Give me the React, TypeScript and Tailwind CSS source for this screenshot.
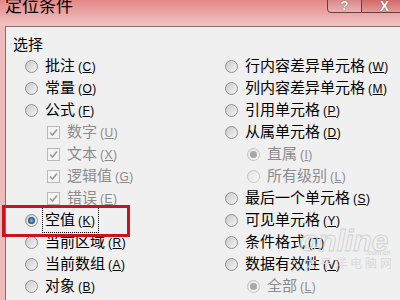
import React from 'react';

type Item = {
  label: string;
  key: string;
  kind: 'radio' | 'check';
  indent?: boolean;
  disabled?: boolean;
  checked?: boolean;
  focus?: boolean;
};

const left: Item[] = [
  { label: '批注', key: 'C', kind: 'radio' },
  { label: '常量', key: 'O', kind: 'radio' },
  { label: '公式', key: 'F', kind: 'radio' },
  { label: '数字', key: 'U', kind: 'check', indent: true, disabled: true, checked: true },
  { label: '文本', key: 'X', kind: 'check', indent: true, disabled: true, checked: true },
  { label: '逻辑值', key: 'G', kind: 'check', indent: true, disabled: true, checked: true },
  { label: '错误', key: 'E', kind: 'check', indent: true, disabled: true, checked: true },
  { label: '空值', key: 'K', kind: 'radio', checked: true, focus: true },
  { label: '当前区域', key: 'R', kind: 'radio' },
  { label: '当前数组', key: 'A', kind: 'radio' },
  { label: '对象', key: 'B', kind: 'radio' },
];

const right: Item[] = [
  { label: '行内容差异单元格', key: 'W', kind: 'radio' },
  { label: '列内容差异单元格', key: 'M', kind: 'radio' },
  { label: '引用单元格', key: 'P', kind: 'radio' },
  { label: '从属单元格', key: 'D', kind: 'radio' },
  { label: '直属', key: 'I', kind: 'radio', indent: true, disabled: true, checked: true },
  { label: '所有级别', key: 'L', kind: 'radio', indent: true, disabled: true },
  { label: '最后一个单元格', key: 'S', kind: 'radio' },
  { label: '可见单元格', key: 'Y', kind: 'radio' },
  { label: '条件格式', key: 'T', kind: 'radio' },
  { label: '数据有效性', key: 'V', kind: 'radio' },
  { label: '全部', key: 'L', kind: 'radio', indent: true, disabled: true, checked: true },
];

function Radio({ checked, disabled }: { checked?: boolean; disabled?: boolean }) {
  return (
    <span
      className={
        'w-[13px] h-[13px] shrink-0 rounded-full border flex items-center justify-center ' +
        (disabled
          ? 'border-[#c4c4c4] bg-linear-to-br from-[#e2e2e2] to-[#fafafa]'
          : 'border-[#8f8f8f] bg-linear-to-br from-[#c9c9c9] to-[#f6f6f6]')
      }
    >
      {checked && (
        <span
          className={
            'w-[7px] h-[7px] rounded-full ' +
            (disabled
              ? 'bg-[#a8a8a8]'
              : 'bg-radial from-[#8fc4ea] via-[#2f6a9c] to-[#173c5e]')
          }
        />
      )}
    </span>
  );
}

function Check({ checked }: { checked?: boolean }) {
  return (
    <span className="w-[13px] h-[13px] shrink-0 border border-[#b8b8b8] bg-[#f4f4f4] flex items-center justify-center">
      {checked && (
        <svg width="9" height="9" viewBox="0 0 9 9">
          <path d="M1 4.5 L3.5 7 L8 1.5" fill="none" stroke="#9a9a9a" strokeWidth="1.6" />
        </svg>
      )}
    </span>
  );
}

function Row({ item }: { item: Item }) {
  return (
    <div className={'h-[22px] flex items-center gap-[7px] ' + (item.indent ? 'pl-[22px]' : '')}>
      {item.kind === 'radio' ? (
        <Radio checked={item.checked} disabled={item.disabled} />
      ) : (
        <Check checked={item.checked} />
      )}
      <span
        className={
          'flex items-baseline whitespace-nowrap leading-[18px] ' +
          (item.disabled ? 'text-[#8c8c8c] ' : 'text-black ') +
          (item.focus ? 'outline outline-1 outline-dotted outline-black outline-offset-[2px]' : '')
        }
      >
        <span className="text-[15px]">{item.label}</span>
        <span className="text-[12px] ml-[3px] font-['Liberation_Sans',sans-serif] tracking-[0.5px]">
          (<span className="underline">{item.key}</span>)
        </span>
      </span>
    </div>
  );
}

export default function App() {
  return (
    <div className="relative w-[400px] h-[300px] overflow-hidden flex flex-col bg-[#eebcbc] font-['Noto_Sans_CJK_SC',sans-serif]">
      {/* title bar */}
      <div className="h-[26px] shrink-0 flex items-start justify-between bg-linear-to-b from-[#e48888] via-[#eaa6a6] to-[#f1c4c4]">
        <span className="text-[17px] leading-[17px] -mt-[4px] ml-[5px] text-black">定位条件</span>
        <div className="flex -mr-[8px]">
          <div className="w-[35px] h-[14px] -mt-[1px] border border-[#6e3c3c] rounded-bl-[4px] bg-linear-to-b from-[#d88a8a] to-[#eab2b2] flex items-end justify-center">
            <span className="text-[13px] leading-[12px] font-bold text-white [text-shadow:0_0_1px_#333] font-['Liberation_Sans',sans-serif]">?</span>
          </div>
          <div className="w-[46px] h-[14px] -mt-[1px] border border-l-0 border-[#6e3c3c] rounded-br-[4px] bg-linear-to-b from-[#d06a6a] to-[#e49a9a] flex items-end justify-center">
            <span className="text-[14px] leading-[12px] font-bold text-white [text-shadow:0_0_1px_#222] font-['Liberation_Sans',sans-serif]">X</span>
          </div>
        </div>
      </div>

      {/* client area */}
      <div className="flex-1 ml-[5px] border-l border-t border-[#8c6e6e] bg-[#f0f0f0] pt-[8px]">
        <div className="h-[18px] pl-[7px] text-[15px] leading-[18px] text-black">选择</div>
        <div className="grid grid-cols-[200px_1fr] pl-[19px] mt-[2px]">
          <div className="flex flex-col">
            {left.map((it, i) => (
              <Row key={i} item={it} />
            ))}
          </div>
          <div className="flex flex-col">
            {right.map((it, i) => (
              <Row key={i} item={it} />
            ))}
          </div>
        </div>
      </div>

      {/* red highlight annotation */}
      <div className="absolute left-[2px] top-[205px] w-[128px] h-[32px] border-[3px] border-[#c8141c]" />

      {/* watermark */}
      <div className="absolute left-[300px] top-[226px] text-[30px] leading-[30px] italic font-bold text-transparent [-webkit-text-stroke:1px_#d2d2d2] font-['Liberation_Sans',sans-serif]">
        online
      </div>
      <div className="absolute left-[366px] top-[248px] text-[7px] text-[#cfcfcf] font-['Liberation_Sans',sans-serif]">.com.cn</div>
      <div className="absolute left-[305px] top-[257px] text-[12px] leading-[12px] tracking-[3px] text-[#dadada]">太平洋电脑网</div>
    </div>
  );
}
